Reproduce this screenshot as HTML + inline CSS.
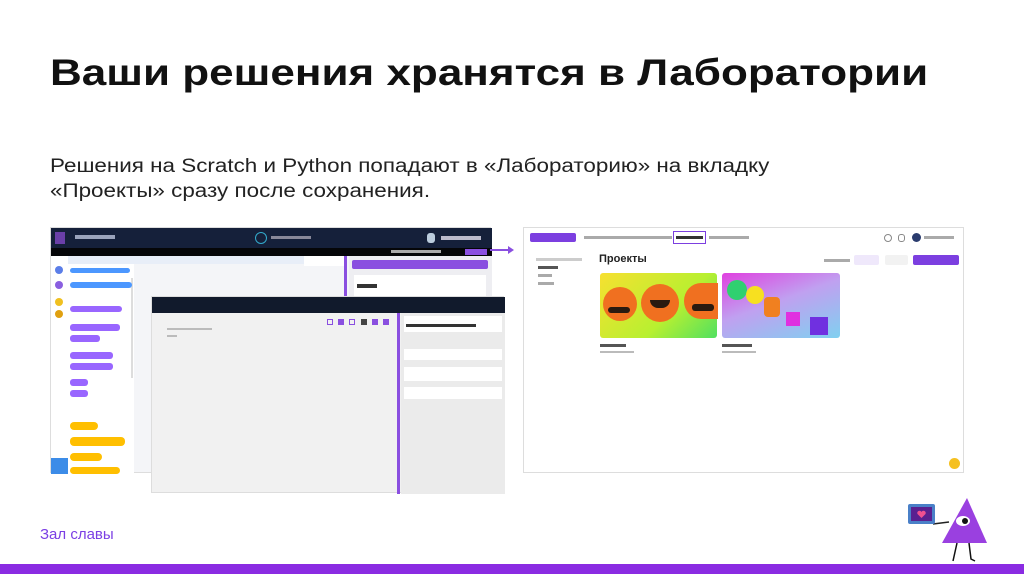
<!DOCTYPE html>
<html><head><meta charset="utf-8"><style>
*{margin:0;padding:0;box-sizing:border-box}
body{width:1024px;height:574px;background:#fff;position:relative;overflow:hidden;font-family:"Liberation Sans",sans-serif}
.a{position:absolute}
.t{white-space:nowrap;transform-origin:left top;display:inline-block}
</style></head><body>
<div class="a t" style="left:50px;top:52px;font-size:37px;font-weight:bold;color:#111;transform:scaleX(1.19)">Ваши решения хранятся в Лаборатории</div>
<div class="a t" style="left:50px;top:154px;font-size:19px;color:#222;line-height:25px;transform:scaleX(1.18)">Решения на Scratch и Python попадают в «Лабораторию» на вкладку<br>«Проекты» сразу после сохранения.</div>

<!-- Scratch window -->
<div class="a" style="left:50px;top:227px;width:441px;height:246px;background:#f4f5f8;border:1px solid #ddd">
 <div class="a" style="left:0;top:0;width:441px;height:20px;background:#15203a"></div>
 <div class="a" style="left:4px;top:4px;width:10px;height:12px;background:#6a3fa8"></div>
 <div class="a" style="left:24px;top:7px;width:40px;height:4px;background:#9aa3bb"></div>
 <div class="a" style="left:204px;top:4px;width:12px;height:12px;border:1px solid #3ac;border-radius:50%"></div>
 <div class="a" style="left:220px;top:8px;width:40px;height:3px;background:#889"></div>
 <div class="a" style="left:376px;top:5px;width:8px;height:10px;background:#bcd;border-radius:3px"></div>
 <div class="a" style="left:390px;top:8px;width:40px;height:4px;background:#bbc"></div>
 <div class="a" style="left:0;top:20px;width:441px;height:8px;background:#050608"></div>
 <div class="a" style="left:340px;top:22px;width:50px;height:3px;background:#aaa"></div>
 <div class="a" style="left:414px;top:21px;width:22px;height:6px;background:#8a4fe0"></div>
 <div class="a" style="left:0;top:28px;width:17px;height:218px;background:#fff"></div>
 <div class="a" style="left:4px;top:38px;width:8px;height:8px;background:#5b7ee8;border-radius:50%"></div>
 <div class="a" style="left:4px;top:53px;width:8px;height:8px;background:#8a5fe0;border-radius:50%"></div>
 <div class="a" style="left:4px;top:70px;width:8px;height:8px;background:#f0c020;border-radius:50%"></div>
 <div class="a" style="left:4px;top:82px;width:8px;height:8px;background:#e0a010;border-radius:50%"></div>
 <div class="a" style="left:0;top:230px;width:17px;height:16px;background:#3c8ce8"></div>
 <div class="a" style="left:17px;top:28px;width:66px;height:218px;background:#fff"></div>
 <div class="a" style="left:17px;top:28px;width:270px;height:8px;background:#e8eef8"></div>
 <div class="a" style="left:80px;top:50px;width:2px;height:100px;background:#ddd"></div>
 <div class="a" style="left:19px;top:40px;width:60px;height:5px;background:#4c97ff;border-radius:3px"></div>
 <div class="a" style="left:19px;top:54px;width:62px;height:6px;background:#4c97ff;border-radius:3px"></div>
 <div class="a" style="left:19px;top:78px;width:52px;height:6px;background:#9966ff;border-radius:3px"></div>
 <div class="a" style="left:19px;top:96px;width:50px;height:7px;background:#9966ff;border-radius:3px"></div>
 <div class="a" style="left:19px;top:107px;width:30px;height:7px;background:#9966ff;border-radius:3px"></div>
 <div class="a" style="left:19px;top:124px;width:43px;height:7px;background:#9966ff;border-radius:3px"></div>
 <div class="a" style="left:19px;top:135px;width:43px;height:7px;background:#9966ff;border-radius:3px"></div>
 <div class="a" style="left:19px;top:151px;width:18px;height:7px;background:#9966ff;border-radius:3px"></div>
 <div class="a" style="left:19px;top:162px;width:18px;height:7px;background:#9966ff;border-radius:3px"></div>
 <div class="a" style="left:19px;top:194px;width:28px;height:8px;background:#ffbf00;border-radius:4px"></div>
 <div class="a" style="left:19px;top:209px;width:55px;height:9px;background:#ffbf00;border-radius:4px"></div>
 <div class="a" style="left:19px;top:225px;width:32px;height:8px;background:#ffbf00;border-radius:4px"></div>
 <div class="a" style="left:19px;top:239px;width:50px;height:7px;background:#ffbf00;border-radius:4px"></div>
 <div class="a" style="left:253px;top:28px;width:40px;height:10px;background:#fff"></div>
 <div class="a" style="left:293px;top:28px;width:3px;height:218px;background:#8a4fe0"></div>
 <div class="a" style="left:298px;top:28px;width:143px;height:218px;background:#eeeef2"></div>
 <div class="a" style="left:301px;top:32px;width:136px;height:9px;background:#8a4fe0;border-radius:2px"></div>
 <div class="a" style="left:303px;top:47px;width:132px;height:24px;background:#fff"></div>
 <div class="a" style="left:306px;top:56px;width:20px;height:4px;background:#333"></div>
</div>
<!-- arrow -->
<div class="a" style="left:490px;top:249px;width:20px;height:2px;background:#8a4fe0"></div>
<div class="a" style="left:508px;top:246px;width:0;height:0;border-left:6px solid #8a4fe0;border-top:4px solid transparent;border-bottom:4px solid transparent"></div>

<!-- Python window -->
<div class="a" style="left:151px;top:296px;width:353px;height:197px;background:#f1f1f1;border:1px solid #ddd">
 <div class="a" style="left:0;top:0;width:353px;height:16px;background:#111a2c"></div>
 <div class="a" style="left:245px;top:16px;width:3px;height:181px;background:#8a4fe0"></div>
 <div class="a" style="left:249px;top:16px;width:104px;height:181px;background:#ebebeb"></div>
 <div class="a" style="left:252px;top:19px;width:98px;height:16px;background:#fff"></div>
 <div class="a" style="left:254px;top:27px;width:70px;height:3px;background:#333"></div>
 <div class="a" style="left:252px;top:52px;width:98px;height:11px;background:#fff"></div>
 <div class="a" style="left:252px;top:70px;width:98px;height:14px;background:#fff"></div>
 <div class="a" style="left:252px;top:90px;width:98px;height:12px;background:#fff"></div>
 <div class="a" style="left:175px;top:22px;width:6px;height:6px;border:1px solid #8a4fe0"></div>
 <div class="a" style="left:186px;top:22px;width:6px;height:6px;background:#8a4fe0"></div>
 <div class="a" style="left:197px;top:22px;width:6px;height:6px;border:1px solid #8a4fe0"></div>
 <div class="a" style="left:209px;top:22px;width:6px;height:6px;background:#444"></div>
 <div class="a" style="left:220px;top:22px;width:6px;height:6px;background:#8a4fe0"></div>
 <div class="a" style="left:231px;top:22px;width:6px;height:6px;background:#8a4fe0"></div>
 <div class="a" style="left:15px;top:31px;width:45px;height:2px;background:#bbb"></div>
 <div class="a" style="left:15px;top:38px;width:10px;height:2px;background:#bbb"></div>
</div>

<!-- Lab screenshot -->
<div class="a" style="left:523px;top:227px;width:441px;height:246px;background:#fff;border:1px solid #ddd">
 <div class="a" style="left:6px;top:5px;width:46px;height:9px;background:#7c3fe0;border-radius:2px"></div>
 <div class="a" style="left:60px;top:8px;width:88px;height:3px;background:#aaa"></div>
 <div class="a" style="left:149px;top:3px;width:33px;height:13px;border:1px solid #7c3fe0"></div>
 <div class="a" style="left:152px;top:8px;width:27px;height:3px;background:#333"></div>
 <div class="a" style="left:185px;top:8px;width:40px;height:3px;background:#aaa"></div>
 <div class="a" style="left:360px;top:6px;width:8px;height:8px;border:1px solid #888;border-radius:50%"></div>
 <div class="a" style="left:374px;top:6px;width:7px;height:8px;border:1px solid #888;border-radius:3px"></div>
 <div class="a" style="left:388px;top:5px;width:9px;height:9px;background:#2a3c6e;border-radius:50%"></div>
 <div class="a" style="left:400px;top:8px;width:30px;height:3px;background:#aaa"></div>
 <div class="a" style="left:12px;top:30px;width:46px;height:3px;background:#ccc"></div>
 <div class="a" style="left:14px;top:38px;width:20px;height:3px;background:#555"></div>
 <div class="a" style="left:14px;top:46px;width:14px;height:3px;background:#aaa"></div>
 <div class="a" style="left:14px;top:54px;width:16px;height:3px;background:#aaa"></div>
 <div class="a" style="left:75px;top:25px;font-size:11px;font-weight:bold;color:#222">Проекты</div>
 <div class="a" style="left:300px;top:31px;width:26px;height:3px;background:#aaa"></div>
 <div class="a" style="left:330px;top:27px;width:25px;height:10px;background:#efe8fb;border-radius:2px"></div>
 <div class="a" style="left:361px;top:27px;width:23px;height:10px;background:#f2f2f2;border-radius:2px"></div>
 <div class="a" style="left:389px;top:27px;width:46px;height:10px;background:#7c3fe0;border-radius:2px"></div>
 <div class="a" style="left:76px;top:45px;width:117px;height:65px;border-radius:3px;background:linear-gradient(135deg,#f7e030,#b8f030 60%,#50e060)"></div>
 <div class="a" style="left:79px;top:59px;width:34px;height:34px;border-radius:50%;background:#f07020"></div>
 <div class="a" style="left:117px;top:56px;width:38px;height:38px;border-radius:50%;background:#f07020"></div>
 <div class="a" style="left:160px;top:55px;width:34px;height:36px;border-radius:50% 0 0 50%;background:#f07020"></div>
 <div class="a" style="left:84px;top:79px;width:22px;height:6px;background:#2a1a10;border-radius:3px"></div>
 <div class="a" style="left:126px;top:72px;width:20px;height:8px;background:#2a1a10;border-radius:0 0 8px 8px"></div>
 <div class="a" style="left:168px;top:76px;width:22px;height:7px;background:#2a1a10;border-radius:3px"></div>
 <div class="a" style="left:198px;top:45px;width:118px;height:65px;border-radius:3px;background:linear-gradient(160deg,#e040e0,#c0a0f0 45%,#80d0f0)"></div>
 <div class="a" style="left:203px;top:52px;width:20px;height:20px;border-radius:50%;background:#30d070"></div>
 <div class="a" style="left:222px;top:58px;width:18px;height:18px;border-radius:50%;background:#f7e020"></div>
 <div class="a" style="left:240px;top:69px;width:16px;height:20px;border-radius:4px;background:#f08020"></div>
 <div class="a" style="left:262px;top:84px;width:14px;height:14px;background:#e030e0"></div>
 <div class="a" style="left:286px;top:89px;width:18px;height:18px;background:#7030e0"></div>
 <div class="a" style="left:76px;top:116px;width:26px;height:3px;background:#555"></div>
 <div class="a" style="left:76px;top:123px;width:34px;height:2px;background:#bbb"></div>
 <div class="a" style="left:198px;top:116px;width:30px;height:3px;background:#555"></div>
 <div class="a" style="left:198px;top:123px;width:34px;height:2px;background:#bbb"></div>
 <div class="a" style="left:425px;top:230px;width:11px;height:11px;border-radius:50%;background:#f5c020"></div>
</div>

<div class="a" style="left:40px;top:526px;font-size:15px;color:#7b3fe4">Зал славы</div>

<!-- mascot -->
<svg class="a" style="left:905px;top:495px" width="90" height="70">
 <path d="M28 29 L44 27" stroke="#222" stroke-width="1.5"/>
 <rect x="3" y="9" width="27" height="20" rx="2" fill="#4a80c8"/>
 <rect x="6" y="12" width="21" height="14" fill="#5a2090"/>
 <path d="M16.5 23 l-4 -4 a2.2 2.2 0 0 1 4 -2 a2.2 2.2 0 0 1 4 2z" fill="#f05090"/>
 <path d="M62 3 L82 48 L37 48 Z" fill="#9a40e0"/>
 <ellipse cx="58" cy="26" rx="7" ry="5" fill="#fff"/>
 <circle cx="60" cy="26" r="3" fill="#111"/>
 <path d="M52 48 L48 66 M64 48 L66 64 L70 66" stroke="#111" stroke-width="1.5" fill="none"/>
</svg>
<div class="a" style="left:0;top:564px;width:1024px;height:10px;background:#8a2be2"></div>
</body></html>
